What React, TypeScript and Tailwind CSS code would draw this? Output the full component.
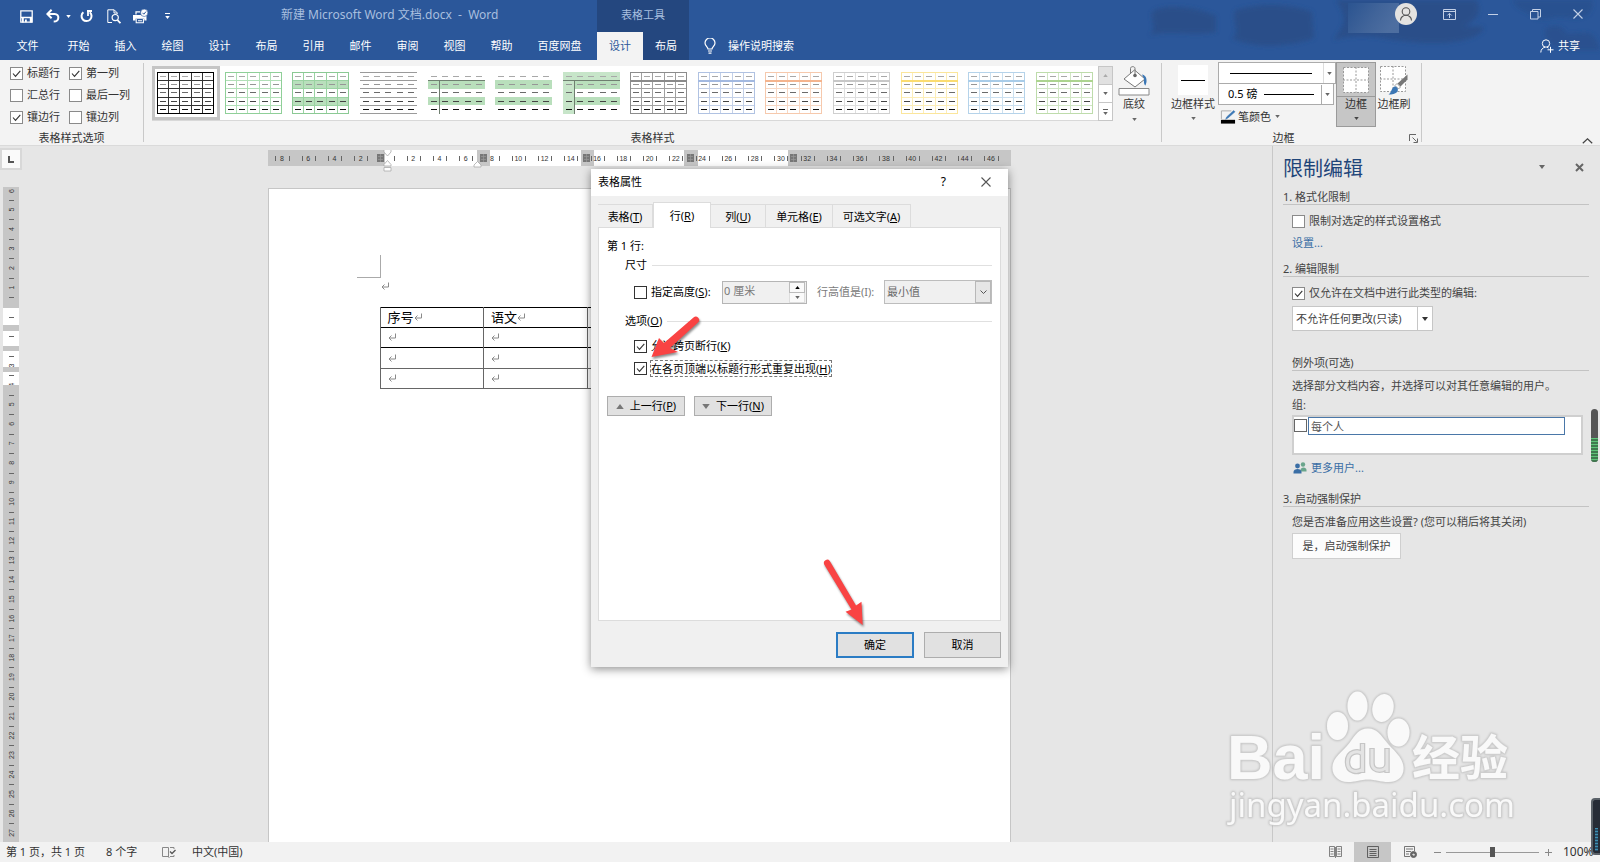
import React, { useId } from "react";

const noop = () => {};

function Caret({ className = "" }: { className?: string }) {
  return (
    <svg viewBox="0 0 6 4" className={`h-[3px] w-[5px] shrink-0 ${className}`} aria-hidden="true">
      <path d="M0 0h6L3 4z" fill="currentColor" />
    </svg>
  );
}

function Check({
  label,
  checked = false,
  border = "border-[#8a8a8a]",
  gap = "gap-1",
  hideLabel = false,
}: {
  label: React.ReactNode;
  checked?: boolean;
  border?: string;
  gap?: string;
  hideLabel?: boolean;
}) {
  const id = useId();
  return (
    <span className={`flex items-center ${gap}`}>
      <span className="relative flex size-[13px] shrink-0">
        <input
          id={id}
          type="checkbox"
          defaultChecked={checked}
          aria-label={hideLabel ? "每个人" : undefined}
          className={`peer size-[13px] appearance-none border bg-white ${border}`}
        />
        <svg viewBox="0 0 13 13" className="pointer-events-none absolute inset-0 hidden size-[13px] peer-checked:block">
          <path d="M3 6.5l2.5 2.8L10.3 3.8" fill="none" stroke="#333" strokeWidth="1.1" />
        </svg>
      </span>
      {!hideLabel && (
        <label htmlFor={id} className="whitespace-nowrap">
          {label}
        </label>
      )}
    </span>
  );
}

/* ---------- title bar ---------- */

function QuickAccess() {
  return (
    <div className="flex items-center text-white">
      <button aria-label="保存" className="ml-5 w-[13px]">
        <svg viewBox="0 0 13 13" className="size-[13px]">
          <path d="M.8.8h11.400v11.400H.8z" fill="none" stroke="currentColor" strokeWidth="1.300" />
          <path d="M1 6.800h11v1.400H1zM2 8h1.800v4.500H2zM9.800 8H12v4.500H9.800z" fill="currentColor" />
          <path d="M5 9.500h1.800v2.800H5z" fill="currentColor" />
        </svg>
      </button>
      <button aria-label="撤消" className="ml-[13px] flex w-6 items-center gap-1.5">
        <svg viewBox="0 0 14 14" className="size-[14px] shrink-0">
          <path d="M1.5 5h7.2c5 0 5 7.6-1 7.6" fill="none" stroke="currentColor" strokeWidth="2" />
          <path d="M5.6.8L1.4 5l4.2 4.2" fill="none" stroke="currentColor" strokeWidth="2" />
        </svg>
        <Caret />
      </button>
      <button aria-label="重复" className="ml-[10px] w-[13px]">
        <svg viewBox="0 0 13 14" className="h-[14px] w-[13px]">
          <path d="M3.4 3.2a5 5 0 1 0 6.4.1" fill="none" stroke="currentColor" strokeWidth="2" />
          <path d="M7 2h5M8 1.500v5.500" fill="none" stroke="currentColor" strokeWidth="1.8" />
        </svg>
      </button>
      <button aria-label="打印预览" className="ml-[14px] w-[14px]">
        <svg viewBox="0 0 14 15" className="h-[15px] w-[14px]" fill="none" stroke="currentColor">
          <path d="M5 13.5H.8V.8h6.4l3 3V5" strokeWidth="1" />
          <path d="M7 1v3h3" strokeWidth="1" />
          <circle cx="8.2" cy="8.6" r="3.1" strokeWidth="1.2" />
          <path d="M10.4 11l3 3.2" strokeWidth="1.8" />
        </svg>
      </button>
      <button aria-label="快速打印" className="ml-[12px] w-[15px]">
        <svg viewBox="0 0 15 15" className="size-[15px]">
          <path d="M0 6h13.500v5.500h-2.200V9.800H2.500v1.700H0z" fill="currentColor" />
          <path d="M3 5.500V2.800h4" fill="none" stroke="currentColor" strokeWidth="1.200" />
          <path d="M3.200 10v3.800h7.200V10M5 11.800h4" fill="none" stroke="currentColor" strokeWidth="1.100" />
          <circle cx="11.2" cy="3.8" r="3.7" fill="currentColor" stroke="#2b579a" strokeWidth=".6" />
          <path d="M9.500 3.800l1.300 1.400 2.200-2.600" fill="none" stroke="#2b579a" strokeWidth="1" />
        </svg>
      </button>
      <button aria-label="自定义快速访问工具栏" className="ml-[17px] flex flex-col items-center gap-0.5">
        <span className="h-px w-[5px] bg-white" />
        <Caret />
      </button>
    </div>
  );
}

function HeaderArt() {
  return (
    <svg viewBox="0 0 460 60" className="pointer-events-none absolute top-0 right-0 h-[60px] w-[460px]" aria-hidden="true">
      <defs>
        <filter id="soft" x="-10%" y="-10%" width="120%" height="120%">
          <feGaussianBlur stdDeviation="2" />
        </filter>
        <linearGradient id="mosaic" x1="0" x2="1" y1="0" y2="0.4">
          <stop offset="0" stopColor="#2b5592" />
          <stop offset="0.6" stopColor="#476a9e" />
          <stop offset="1" stopColor="#5676a6" />
        </linearGradient>
      </defs>
      <g fill="#294d86" filter="url(#soft)" opacity="0.8">
        <path d="M12 12C25 2 60 8 76 16v16c-20 4-50-2-66 3 8-8 0-14 2-23z" />
        <path d="M96 10c20-6 50-8 76 2l2 26c-20 8-60 12-82 0 10-4-2-20 4-28z" />
        <path d="M196 0h140c8 12-2 22-12 26 8 2 14-2 20 2-8 16-50 18-90 12-20-4-40-6-60 0 8-14 16-18 2-40z" />
        <path d="M372 0h80c4 14-10 20-22 18-20-4-30 8-40-4-8-4-12-4-18-14z" opacity=".6" />
        <path d="M405 30c8-8 18-4 22 4 12 0 26-6 30 8l3 8h-30c-12-2-26-6-25-20z" opacity=".7" />
      </g>
      <path d="M208 3h51v30h-51z" fill="url(#mosaic)" opacity="0.8" />
    </svg>
  );
}

function WindowControls() {
  return (
    <div className="relative ml-auto flex items-center text-[#c3d0e6]">
      <button aria-label="帐户" className="mr-[26px] mb-1 flex size-[22px] items-center justify-center rounded-full bg-[#e4e3e1]">
        <svg viewBox="0 0 16 16" className="size-4" fill="none" stroke="#555" strokeWidth="1.1">
          <circle cx="8" cy="5.5" r="3.8" />
          <path d="M2.5 14.5c0-3 2.5-5.2 5.500-5.200s5.500 2.200 5.500 5.200" />
        </svg>
      </button>
      <button aria-label="功能区显示选项" className="mr-[32px] mb-1">
        <svg viewBox="0 0 13 11" className="h-[11px] w-[13px]" fill="none" stroke="currentColor">
          <path d="M.5.5h12v10H.5zM.5 2.5h12M6.500 9V4.500M4.300 6.500l2.200-2.200 2.200 2.200" />
        </svg>
      </button>
      <button aria-label="最小化" className="mr-[32px] mb-1">
        <svg viewBox="0 0 10 11" className="h-[11px] w-[10px]" stroke="currentColor">
          <path d="M0 5.500h10" />
        </svg>
      </button>
      <button aria-label="向下还原" className="mr-[32px] mb-1">
        <svg viewBox="0 0 11 11" className="size-[11px]" fill="none" stroke="currentColor">
          <path d="M.5 2.500h7.500v7.500H.5zM2.500 2.500V.5h8v7.500H8" />
        </svg>
      </button>
      <button aria-label="关闭" className="mr-[17px] mb-1">
        <svg viewBox="0 0 10 10" className="size-[10px]" stroke="currentColor" strokeWidth="1.1">
          <path d="M.5.5l9 9M9.500.5l-9 9" />
        </svg>
      </button>
    </div>
  );
}

const mainTabs = ["开始", "插入", "绘图", "设计", "布局", "引用", "邮件", "审阅", "视图", "帮助"];

function Header() {
  return (
    <header className="relative bg-[#2b579a]">
      <HeaderArt />
      <div className="relative flex h-8 items-stretch">
        <div className="flex w-[597px] shrink-0 items-stretch">
          <QuickAccess />
          <h1 className="ml-[111px] flex items-center pb-0.5 text-[12px] whitespace-pre text-[#a8bfdf]">
            新建 Microsoft Word 文档.docx{"  -  "}Word
          </h1>
        </div>
        <div className="flex w-[92px] shrink-0 items-center justify-center bg-[#24477f] pb-0.5 text-[#a8bfdf]">表格工具</div>
        <WindowControls />
      </div>
      <nav className="relative flex h-7 items-stretch text-white">
        <div className="flex w-[597px] shrink-0">
          <button className="w-[55px]">文件</button>
          {mainTabs.map((t) => (
            <button key={t} className="w-[47px]">
              {t}
            </button>
          ))}
          <button className="w-[69px]">百度网盘</button>
        </div>
        <div className="flex w-[92px] shrink-0 bg-[#24477f]">
          <button className="w-[46px] bg-[#f3f3f3] text-[#2b579a]">设计</button>
          <button className="w-[46px]">布局</button>
        </div>
        <button className="ml-[15px] flex items-center gap-3">
          <svg viewBox="0 0 12 16" className="h-4 w-3" fill="none" stroke="currentColor" strokeWidth="1.2">
            <path d="M4 11c0-2-3-3-3-6a5 5 0 0 1 10 0c0 3-3 4-3 6zM4 13h4M4.500 15.200h3" />
          </svg>
          操作说明搜索
        </button>
        <button className="mr-5 ml-auto flex items-center gap-1">
          <svg viewBox="0 0 14 14" className="size-[14px]" fill="none" stroke="currentColor">
            <circle cx="6" cy="4.500" r="3.700" />
            <path d="M.8 13.500c0-3 2-4.800 4.200-5.300M7 8.200l1.500.8M7.500 10.800h6M10.500 7.800v6" />
          </svg>
          共享
        </button>
      </nav>
    </header>
  );
}

/* ---------- ribbon ---------- */

type Preview = {
  grid?: string;
  outer?: string;
  head?: string;
  hLines?: string;
  band?: string;
  headFill?: string;
  firstCol?: string;
  ruleHead?: boolean;
};

const previews: Preview[] = [
  { grid: "#333", outer: "#000" },
  { grid: "#b2e0b8", outer: "#8fcf98" },
  { grid: "#9ad3a2", outer: "#8bc994", band: "#b9dfbc" },
  { hLines: "#9a9a9a" },
  { band: "#b9dfbc", ruleHead: true },
  { band: "#b9dfbc" },
  { band: "#b9dfbc", headFill: "#c7e5c9", firstCol: "#c7e5c9", ruleHead: true },
  { grid: "#a0a0a0", outer: "#8c8c8c", head: "#8a8a8a" },
  { grid: "#c3d0e8", outer: "#b0c2e2", head: "#a3b9e0" },
  { grid: "#f8d8c4", outer: "#f6c9ad", head: "#f4b48e" },
  { grid: "#dedede", outer: "#cfcfcf", head: "#c8c8c8" },
  { grid: "#fdeeb8", outer: "#fbe69c", head: "#fbdc70" },
  { grid: "#cbe0f0", outer: "#b5d3ea", head: "#a9cce8" },
  { grid: "#d1e6c5", outer: "#bedcab", head: "#add490" },
];

const dashTones = ["#a8a8a8", "#969696", "#6a6a6a", "#444", "#111"];
const rowTops = [0, 8, 16, 25, 33, 41];
const colLefts = [0, 11, 22, 34, 45, 56];

function TablePreview({ p }: { p: Preview }) {
  return (
    <svg viewBox="0 0 57 42" className="h-[42px] w-[57px] shrink-0" aria-hidden="true">
      {p.band && (
        <g fill={p.band}>
          <rect x="0" y="8" width="57" height="9" />
          <rect x="0" y="25" width="57" height="8" />
        </g>
      )}
      {p.headFill && <rect x="0" y="0" width="57" height="8" fill={p.headFill} />}
      {p.firstCol && <rect x="0" y="0" width="11" height="42" fill={p.firstCol} />}
      {p.grid && (
        <g stroke={p.grid} strokeWidth="1">
          {rowTops.slice(1, 5).map((y) => (
            <path key={y} d={`M0 ${y + 0.5}h57`} />
          ))}
          {colLefts.slice(1, 5).map((x) => (
            <path key={x} d={`M${x + 0.5} 0v42`} />
          ))}
          <rect x="0.5" y="0.5" width="56" height="41" fill="none" stroke={p.outer} />
        </g>
      )}
      {p.hLines && rowTops.map((y) => <path key={y} d={`M0 ${y + 0.5}h57`} stroke={p.hLines} strokeWidth="1" />)}
      {p.head && <path d="M0 9h57" stroke={p.head} strokeWidth="2" />}
      {p.ruleHead && <path d="M0 8.500h57M11.500 8v34" stroke="#6f7f70" strokeWidth="1" fill="none" />}
      {dashTones.map((tone, r) =>
        colLefts.slice(0, 5).map((x) => (
          <rect key={`${r}-${x}`} x={x + 3} y={rowTops[r] + 4} width="6" height="1" fill={tone} />
        )),
      )}
    </svg>
  );
}

function Divider() {
  return <div className="my-[3px] w-px shrink-0 bg-[#c9c9c9]" />;
}

function Ribbon() {
  return (
    <section className="flex h-[86px] shrink-0 border-b border-[#dadada] bg-[#f3f3f3] text-[#333]">
      <div className="flex w-[143px] shrink-0 flex-col items-center">
        <div className="mt-0.5 grid grid-cols-[59px_1fr] grid-rows-[22px_22px_22px] self-stretch pl-[10px]">
          <Check label="标题行" checked />
          <Check label="第一列" checked />
          <Check label="汇总行" />
          <Check label="最后一列" />
          <Check label="镶边行" checked />
          <Check label="镶边列" />
        </div>
        <div className="mt-auto leading-[14px]">表格样式选项</div>
      </div>
      <Divider />
      <div className="flex min-w-0 flex-1 flex-col">
        <div className="flex pt-1.5 pl-2">
          <div className="flex h-[55px] min-w-0 flex-1 border-b border-[#d8d8d8] bg-white">
            {previews.map((p, i) => (
              <button
                key={i}
                aria-label={`表格样式 ${i + 1}`}
                className={`flex min-w-0 flex-1 items-center justify-center ${i === 0 ? "shadow-[inset_0_0_0_3px_#c5c5c5]" : ""}`}
              >
                <TablePreview p={p} />
              </button>
            ))}
          </div>
          <div className="flex h-[55px] w-[15px] shrink-0 flex-col border border-[#c6c6c6] bg-white text-[#666]">
            <button aria-label="上一行样式" className="flex flex-1 items-center justify-center bg-[#e1e1e1] text-[#aaa]">
              <Caret className="rotate-180" />
            </button>
            <button aria-label="下一行样式" className="flex flex-1 items-center justify-center border-y border-[#c6c6c6]">
              <Caret />
            </button>
            <button aria-label="其他样式" className="flex flex-1 flex-col items-center justify-center gap-0.5">
              <span className="h-px w-[5px] bg-[#666]" />
              <Caret />
            </button>
          </div>
          <button className="mr-[7px] ml-px flex h-[55px] w-10 shrink-0 flex-col items-center text-[#333]">
            <svg viewBox="0 0 32 30" className="h-[30px] w-8 shrink-0" aria-hidden="true">
              <path d="M6 13L16.500 4 27 13l-10 8z" fill="#fff" stroke="#777" strokeWidth="1" />
              <path d="M12.500 8V2.500c0-2.500 4.500-2.500 4.500 0V10" fill="none" stroke="#777" strokeWidth="1" />
              <circle cx="17" cy="9.500" r="1.800" fill="#666" />
              <path d="M24 8.500c3 .5 5 3 4.500 7.500l-1 3.500c-2-1-1.500-5-1.500-7z" fill="#3b77b5" />
              <path d="M1 22.500h30v6.500H1z" fill="#fff" stroke="#888" strokeWidth="1" />
            </svg>
            <span className="leading-4">底纹</span>
            <Caret className="mt-1.5 text-[#666]" />
          </button>
        </div>
        <div className="mt-auto text-center leading-[14px]">表格样式</div>
      </div>
      <Divider />
      <div className="flex w-[259px] shrink-0 flex-col">
        <div className="flex pt-0.5 pl-1.5">
          <button className="mt-[3px] flex w-[50px] flex-col items-center">
            <span className="flex size-[30px] items-center justify-center bg-white">
              <span className="h-px w-6 bg-black" />
            </span>
            <span className="leading-[18px] whitespace-nowrap">边框样式</span>
            <Caret className="mt-1 text-[#666]" />
          </button>
          <div className="flex w-[118px] flex-col">
            <button aria-label="笔样式" className="flex h-[22px] w-[118px] items-stretch border border-[#ababab] bg-white">
              <span className="mx-[11px] h-px flex-1 self-center bg-black" />
              <span className="flex w-3 items-center justify-center border-l border-[#ddd] text-[#666]">
                <Caret />
              </span>
            </button>
            <div className="relative h-[21px] w-[116px]">
              <select aria-label="笔划粗细" className="h-[21px] w-[116px] appearance-none border border-t-0 border-[#ababab] bg-white pl-[9px] text-black">
                <option>0.5 磅</option>
              </select>
              <span className="pointer-events-none absolute inset-y-0 right-px flex w-[69px] items-center">
                <span className="mr-[7px] h-px flex-1 bg-black" />
                <span className="flex h-5 w-3 items-center justify-center border-l border-[#ababab] text-[#666]">
                  <Caret />
                </span>
              </span>
            </div>
            <button className="flex h-[23px] items-center gap-0.5 pl-0.5">
              <svg viewBox="0 0 17 16" className="h-4 w-4" aria-hidden="true">
                <path d="M1.500 10V1.500H12" fill="none" stroke="#aaa" />
                <path d="M14.500 1l1.500 1.500L8.500 9 6 10.500 7 8z" fill="#3b77b5" stroke="#3b77b5" strokeWidth=".5" />
                <path d="M1 11h15v4H1z" fill="#000" />
              </svg>
              <span>笔颜色</span>
              <Caret className="ml-0.5 text-[#666]" />
            </button>
          </div>
          <button className="flex h-[65px] w-10 flex-col items-center border border-[#9a9a9a] bg-[#c6c6c6]">
            <span className="flex h-[34px] w-full items-center justify-center border-b border-[#9a9a9a]">
              <svg viewBox="0 0 26 26" className="size-[26px]" aria-hidden="true">
                <path d="M.5.5h25v25H.5zM13 0v26M0 13h26" fill="#fff" stroke="#999" strokeDasharray="2 1.500" />
              </svg>
            </span>
            <span className="leading-[14px]">边框</span>
            <Caret className="mt-1.5 text-[#444]" />
          </button>
          <button className="mt-[3px] flex w-9 flex-col items-center">
            <svg viewBox="0 0 30 30" className="h-[30px] w-[30px]" aria-hidden="true">
              <path d="M1.500 1.500h25v25h-25zM14 1v26M1 14h26" fill="#fff" stroke="#999" strokeDasharray="2 1.500" />
              <path d="M28.500 9.500v5l-7 7-3-3z" fill="#777" />
              <path d="M18 18.500l3.500 3.500-2 2-3.500-3.500z" fill="#fff" stroke="#888" strokeWidth=".8" />
              <path d="M15.500 21.500c3 0 4 2.500 3 5-1.500 2.500-6 3-9 3 3-1.500 3-7 6-8z" fill="#3b77b5" />
            </svg>
            <span className="leading-[18px] whitespace-nowrap">边框刷</span>
          </button>
        </div>
        <div className="mt-auto flex items-center leading-[14px]">
          <span className="flex-1 pr-1 text-center">边框</span>
          <button aria-label="边框设置" className="mr-[3px] w-[9px]">
            <svg viewBox="0 0 9 9" className="size-[9px]" fill="none" stroke="#666">
              <path d="M.5 7V.5H7M3.500 3.500l4 4M8.500 4.500v4h-4" />
            </svg>
          </button>
        </div>
      </div>
      <Divider />
      <div className="flex w-[178px] shrink-0 items-end justify-end pr-[7px] pb-px">
        <button aria-label="折叠功能区" className="flex">
          <svg viewBox="0 0 11 6" className="h-1.5 w-[11px]" fill="none" stroke="#444" strokeWidth="1.200">
            <path d="M.8 5.300l4.700-4.500 4.700 4.500" />
          </svg>
        </button>
      </div>
    </section>
  );
}

/* ---------- rulers and page ---------- */

const H_ZERO = 119;
const H_UNIT = 13.13;
const hNumbers = Array.from({ length: 28 }, (_, i) => (i - 4) * 2).filter((n) => n !== 0 && n <= 46);
const hTicks = Array.from({ length: 57 }, (_, i) => i - 8.5).filter((n) => n !== -0.5 && n <= 47.5);
const columnMarks = [109, 212, 315, 419, 522];

function HorizontalRuler() {
  return (
    <svg viewBox="0 0 743 22" className="h-[22px] w-[743px] shrink-0" aria-hidden="true">
      <rect width="743" height="16" y="0" fill="#c6c6c6" />
      <g fill="#fff">
        <rect x="117" y="0" width="92" height="16" />
        <rect x="222" y="0" width="91" height="16" />
        <rect x="326" y="0" width="90" height="16" />
        <rect x="430" y="0" width="90" height="16" />
      </g>
      {hTicks.map((n) => (
        <rect key={n} x={Math.round(H_ZERO + n * H_UNIT)} y="6" width="1" height="5" fill="#666" />
      ))}
      <g fontSize="7" fontFamily="Liberation Sans, sans-serif" textAnchor="middle" fill="#333">
        {hNumbers.map((n) => (
          <text key={n} x={H_ZERO + n * H_UNIT} y="11">
            {Math.abs(n)}
          </text>
        ))}
      </g>
      {columnMarks.map((x) => (
        <g key={x}>
          <rect x={x} y="4" width="7" height="8" fill="#777" />
          <path d={`M${x + 1} 6.500h5M${x + 1} 9.500h5M${x + 3.5} 4v8`} stroke="#999" strokeWidth=".7" />
        </g>
      ))}
      <g fill="#fff" stroke="#aaa" strokeWidth=".8">
        <path d="M116 -1h7v3l-3.500 4-3.500-4z" />
        <path d="M116 16v-1.500l3.500-4 3.500 4V16zM116 17.500h7V21h-7z" />
        <path d="M206 17v-2l3.500-3.500L213 15v2z" />
      </g>
    </svg>
  );
}

const V_ZERO = 120;
const V_UNIT = 19.48;
const vNumbers = Array.from({ length: 34 }, (_, i) => i - 6).filter((n) => n !== 0);
const vTicks = Array.from({ length: 33 }, (_, i) => i - 5.5);

function VerticalRuler() {
  return (
    <svg viewBox="0 0 16 655" className="h-[655px] w-4 shrink-0" aria-hidden="true">
      <rect width="16" height="655" fill="#c6c6c6" />
      <g fill="#fff">
        <rect y="121" width="16" height="17" />
        <rect y="144" width="16" height="15" />
        <rect y="164" width="16" height="16" />
        <rect y="185" width="16" height="13" />
      </g>
      {vTicks.map((n) => (
        <rect key={n} x="6" y={Math.round(V_ZERO + n * V_UNIT)} width="5" height="1" fill="#666" />
      ))}
      <g fontSize="7" fontFamily="Liberation Sans, sans-serif" textAnchor="middle" fill="#333">
        {vNumbers
          .filter((n) => n !== 1 && n !== 2)
          .map((n) => (
            <text key={n} transform={`translate(11 ${V_ZERO + n * V_UNIT + (n === -6 ? 1 : 0)}) rotate(-90)`}>
              {Math.abs(n)}
            </text>
          ))}
      </g>
      <g fill="#c6c6c6">
        <rect y="180" width="16" height="5" />
        <rect y="198" width="16" height="4" />
      </g>
    </svg>
  );
}

function Mark() {
  return (
    <svg viewBox="0 0 8 8" className="inline-block size-2 align-[1px]" fill="none" stroke="#8a8a8a" aria-hidden="true">
      <path d="M7.500.5v4.500h-6.500M3.500 2.500L1 5l2.500 2.500" />
    </svg>
  );
}

const docRows = [
  ["序号", "语文", "", ""],
  ["", "", "", ""],
  ["", "", "", ""],
  ["", "", "", ""],
];

function Workspace() {
  return (
    <main className="flex min-h-0 flex-1 bg-[#e6e6e6]">
      <div className="flex w-6 shrink-0 flex-col overflow-hidden">
        <button aria-label="制表符" className="mt-0.5 flex h-[22px] w-[22px] shrink-0 items-center justify-center border-2 border-[#d8d8d8] bg-[#fafafa]">
          <svg viewBox="0 0 6 7" className="h-[7px] w-1.5">
            <path d="M1 0v6h5" fill="none" stroke="#555" strokeWidth="2" />
          </svg>
        </button>
        <div className="mt-[17px] pl-[3px]">
          <VerticalRuler />
        </div>
      </div>
      <div className="flex min-w-0 flex-1 flex-col items-center overflow-hidden pt-1 pr-[18px]">
        <HorizontalRuler />
        <article className="mt-4 w-[743px] flex-1 border border-b-0 border-[#c6c6c6] bg-white text-[13px] text-black">
          <div className="mt-[66px] ml-[88px] h-[23px] w-6 border-r border-b border-[#aaa]" />
          <div className="ml-[112px] flex h-[29px] items-start pt-1">
            <Mark />
          </div>
          <table className="ml-[111px] w-[415px] table-fixed border-collapse">
            <tbody>
              {docRows.map((row, r) => (
                <tr
                  key={r}
                  className={r < 2 ? "h-5 border-y border-black" : r === 2 ? "h-[21px] border-t border-black" : "h-5 border-y border-[#666]"}
                >
                  {row.map((cell, c) => (
                    <td key={c} className="border-x border-x-[#666] p-0 pl-[7px] align-middle leading-[19px]">
                      {cell}
                      <Mark />
                    </td>
                  ))}
                </tr>
              ))}
            </tbody>
          </table>
        </article>
      </div>
      <RestrictPane />
    </main>
  );
}

/* ---------- side pane ---------- */

function PaneHeading({ children, className = "" }: { children: React.ReactNode; className?: string }) {
  return <h3 className={`h-[17px] border-b border-[#c3c3c3] leading-[17px] ${className}`}>{children}</h3>;
}

function RestrictPane() {
  return (
    <aside className="w-[328px] shrink-0 border-l border-[#c8c8c8] pr-[11px] pl-[10px] text-[#444]">
      <div className="flex h-[42px] items-center">
        <h2 className="pt-1 text-[20px] text-[#1f4579]">限制编辑</h2>
        <button aria-label="任务窗格选项" className="ml-auto text-[#666]">
          <Caret className="!h-1 !w-2" />
        </button>
        <button aria-label="关闭窗格" className="mr-[5px] ml-[29px]">
          <svg viewBox="0 0 9 9" className="size-[9px]" stroke="#666" strokeWidth="2">
            <path d="M1 1l7 7M8 1L1 8" />
          </svg>
        </button>
      </div>
      <PaneHeading>1. 格式化限制</PaneHeading>
      <div className="mt-[5px] flex h-[22px] items-center pl-[9px]">
        <Check label="限制对选定的样式设置格式" />
      </div>
      <div className="flex h-[22px] items-center pl-[9px]">
        <a href="#settings" className="text-[#3a6ea5]">
          设置...
        </a>
      </div>
      <PaneHeading className="mt-1.5">2. 编辑限制</PaneHeading>
      <div className="mt-[5px] flex h-[22px] items-center pl-[9px]">
        <Check label="仅允许在文档中进行此类型的编辑:" checked />
      </div>
      <div className="pl-[9px]">
        <div className="relative mt-0.5 h-[25px] w-[141px]">
          <select aria-label="编辑限制类型" className="h-[25px] w-[141px] appearance-none border border-[#c6c6c6] bg-white pl-[3px] text-[#444]">
            <option>不允许任何更改(只读)</option>
          </select>
          <span className="pointer-events-none absolute inset-y-px right-px flex w-[15px] items-center justify-center border-l border-[#c6c6c6] bg-white text-[#333]">
            <Caret className="!h-1 !w-2" />
          </span>
        </div>
        <PaneHeading className="mt-[23px]">例外项(可选)</PaneHeading>
        <p className="mt-[5px] leading-5 whitespace-nowrap">选择部分文档内容，并选择可以对其任意编辑的用户。</p>
        <p className="leading-[18px]">组:</p>
        <div className="mt-px mr-[6px] flex h-10 items-start border-2 border-[#cfcfcf] bg-white">
          <div className="pt-0.5">
            <Check label="" hideLabel border="border-[#666]" />
          </div>
          <input aria-label="组名称" defaultValue="每个人" className="ml-px h-[18px] w-[257px] border border-[#4a77a8] bg-white pl-0.5 text-[#555]" />
        </div>
        <a href="#users" className="mt-1 ml-px flex h-[18px] items-center gap-1 text-[#3a6ea5]">
          <svg viewBox="0 0 14 12" className="h-3 w-[14px]" aria-hidden="true">
            <circle cx="10" cy="2.500" r="2.200" fill="#6aa58c" />
            <path d="M7.500 9.500V8c0-3.500 6-3.500 6 0v1.500z" fill="#6aa58c" />
            <circle cx="4.500" cy="4" r="2.400" fill="#3a6ea5" />
            <path d="M.5 11.500V10c0-4 8-4 8 0v1.500z" fill="#3a6ea5" />
          </svg>
          更多用户...
        </a>
      </div>
      <PaneHeading className="mt-[13px]">3. 启动强制保护</PaneHeading>
      <div className="pl-[9px]">
        <p className="mt-[5px] leading-5 whitespace-nowrap">您是否准备应用这些设置? (您可以稍后将其关闭)</p>
        <button className="mt-px h-[26px] w-[109px] border border-[#cfcfcf] bg-[#fcfcfc]">是，启动强制保护</button>
      </div>
    </aside>
  );
}

/* ---------- dialog ---------- */

function Key({ k }: { k: string }) {
  return (
    <>
      (<span className="underline underline-offset-1">{k}</span>)
    </>
  );
}

const dialogTabs = [
  { name: "表格", k: "T", w: "w-[55px]" },
  { name: "行", k: "R", w: "w-[58px]" },
  { name: "列", k: "U", w: "w-[55px]" },
  { name: "单元格", k: "E", w: "w-[67px]" },
  { name: "可选文字", k: "A", w: "w-[78px]" },
];

function Legend({ children }: { children: React.ReactNode }) {
  return (
    <div className="flex h-5 items-center gap-[5px] pl-[18px]">
      <span>{children}</span>
      <span className="h-px flex-1 bg-[#e0e0e0]" />
    </div>
  );
}

function PropertiesDialog() {
  return (
    <div
      role="dialog"
      aria-label="表格属性"
      className="absolute top-[169px] left-[591px] flex w-[417px] flex-col bg-[#f0f0f0] text-black shadow-[0_2px_9px_rgba(0,0,0,0.45)]"
    >
      <div className="flex h-[27px] items-center bg-white pr-[17px] pb-0.5 pl-[7px]">
        <span>表格属性</span>
        <button aria-label="帮助" className="ml-auto text-[12px]">
          ?
        </button>
        <button aria-label="关闭" className="ml-[35px]">
          <svg viewBox="0 0 10 10" className="size-[10px]" stroke="#555" strokeWidth="1.100">
            <path d="M.5.5l9 9M9.500.5l-9 9" />
          </svg>
        </button>
      </div>
      <div className="flex flex-col px-[7px] pt-[7px] pb-[9px]">
        <div role="tablist" className="flex h-6 items-end">
          {dialogTabs.map((t) => (
            <button
              key={t.name}
              role="tab"
              aria-selected={t.k === "R"}
              className={`${t.w} whitespace-nowrap ${
                t.k === "R" ? "relative top-px h-[26px] border border-b-0 border-[#dcdcdc] bg-white pb-1" : "h-[23px] border-t border-r border-[#dcdcdc] pb-1"
              } pt-1`}
            >
              {t.name}
              <Key k={t.k} />
            </button>
          ))}
        </div>
        <div className="flex h-[394px] flex-col border border-[#dcdcdc] bg-white px-[8px] pt-[9px]">
          <div className="leading-[18px]">第 1 行:</div>
          <Legend>尺寸</Legend>
          <div className="mt-[5px] flex h-6 items-center pl-[27px]">
            <Check label={<>指定高度<Key k="S" />:</>} border="border-[#333]" />
            <div className="ml-auto flex h-[23px] w-[85px] items-stretch border border-[#b5b5b5] bg-[#f0f0f0]">
              <input aria-label="高度" disabled defaultValue="0 厘米" className="w-[66px] bg-transparent pb-0.5 pl-px text-[#7a7a7a]" />
              <div className="flex w-4 flex-col bg-[#fafafa]">
                <button aria-label="增加" className="flex flex-1 items-center justify-center border border-[#bbb] text-black">
                  <Caret className="rotate-180" />
                </button>
                <button aria-label="减少" className="flex flex-1 items-center justify-center border border-t-0 border-[#ddd] text-[#666]">
                  <Caret />
                </button>
              </div>
            </div>
            <label htmlFor="row-rule" className="ml-[10px] w-[67px] text-[#7a7a7a]">
              行高值是(I):
            </label>
            <div className="relative h-6 w-[108px]">
              <select id="row-rule" disabled className="h-6 w-[108px] appearance-none border border-[#bdbdbd] bg-[#f0f0f0] pl-0.5 text-[#6a6a6a] opacity-100">
                <option>最小值</option>
              </select>
              <span className="pointer-events-none absolute inset-y-px right-px flex w-4 items-center justify-center border border-[#b8b8b8] bg-[#e6e6e6]">
                <svg viewBox="0 0 7 4" className="h-1 w-[7px]" fill="none" stroke="#555">
                  <path d="M.5.5l3 3 3-3" />
                </svg>
              </span>
            </div>
          </div>
          <div className="mt-[7px]">
            <Legend>
              选项
              <Key k="O" />
            </Legend>
          </div>
          <div className="mt-1 flex h-[22px] items-center pl-[27px]">
            <Check label={<>允许跨页断行<Key k="K" /></>} checked border="border-[#333]" />
          </div>
          <div className="flex h-[22px] items-center pl-[27px]">
            <Check
              label={
                <span className="block border border-dashed border-[#777] leading-[15px]">
                  在各页顶端以标题行形式重复出现
                  <Key k="H" />
                </span>
              }
              checked
              border="border-[#333]"
              gap="gap-[3px]"
            />
          </div>
          <div className="mt-[17px] flex gap-[9px]">
            <button className="flex h-5 w-[78px] items-center justify-center gap-1.5 border border-[#adadad] bg-[#e1e1e1]">
              <Caret className="!h-[5px] !w-2 rotate-180 text-[#777]" />
              <span>
                上一行
                <Key k="P" />
              </span>
            </button>
            <button className="flex h-5 w-[78px] items-center justify-center gap-1.5 border border-[#adadad] bg-[#e1e1e1]">
              <Caret className="!h-[5px] !w-2 text-[#777]" />
              <span>
                下一行
                <Key k="N" />
              </span>
            </button>
          </div>
        </div>
        <div className="mt-[11px] flex justify-end gap-[10px]">
          <button className="h-[26px] w-[78px] border-2 border-[#2b7cc4] bg-[#e1e1e1]">确定</button>
          <button className="h-[26px] w-[77px] border border-[#adadad] bg-[#e1e1e1]">取消</button>
        </div>
      </div>
      <svg viewBox="0 0 417 498" className="pointer-events-none absolute top-0 left-0 h-[498px] w-[417px]" aria-hidden="true">
        <g fill="#f94343" stroke="none" style={{ filter: "drop-shadow(1px 2px 1px rgba(0,0,0,0.45))" }}>
          <path d="M60.500 188L68 169l5 5 29.500-25.500a3.300 3.300 0 0 1 4.500 5L79 179l8 4z" />
          <path d="M271.700 456L254.500 442.800l6-2.400-27.300-45a3.300 3.300 0 0 1 5.600-3.400L265 436.500l5.500-3.800z" />
        </g>
      </svg>
    </div>
  );
}

/* ---------- status bar ---------- */

function StatusBar() {
  return (
    <footer className="flex h-5 shrink-0 items-stretch bg-[#f2f2f2] text-[#333]">
      <div className="flex items-center">
        <span className="ml-1.5 w-[100px]">第 1 页，共 1 页</span>
        <span className="w-[56px]">8 个字</span>
        <svg viewBox="0 0 14 12" className="h-3 w-[14px]" fill="none" stroke="#888" aria-hidden="true">
          <path d="M6.500 1.500H.5v9h6l1 1M6.500 1.500v10M8 1.500h4V3M8 10.500h4V9" />
          <path d="M8 5.500l2 2 3.500-3.500" stroke="#555" strokeWidth="1.300" />
        </svg>
        <span className="ml-4">中文(中国)</span>
      </div>
      <div className="ml-auto flex items-center">
        <button aria-label="阅读视图" className="flex w-[37px] justify-center">
          <svg viewBox="0 0 13 12" className="h-3 w-[13px]" fill="none" stroke="#666" aria-hidden="true">
            <path d="M.5.500h5v10h-5zM7.500.5h5v10h-5zM6.500 1v11M1.500 3h3M1.500 5.500h3M1.500 8h3M8.500 3h3M8.500 5.500h3M8.500 8h3" strokeWidth=".8" />
          </svg>
        </button>
        <button aria-label="页面视图" className="flex h-5 w-[37px] items-center justify-center bg-[#c6c6c6]">
          <svg viewBox="0 0 12 12" className="size-3" fill="none" stroke="#555" aria-hidden="true">
            <path d="M.5.500h11v11H.5zM2.500 3.500h7M2.500 5.500h7M2.500 7.500h7M2.500 9.500h7" strokeWidth=".9" />
          </svg>
        </button>
        <button aria-label="Web 版式视图" className="flex w-[38px] justify-center">
          <svg viewBox="0 0 13 12" className="h-3 w-[13px]" fill="none" stroke="#666" aria-hidden="true">
            <path d="M6 10.500H.5V.5h10V5M2 3h7M2 5.500h5M2 8h3" strokeWidth=".9" />
            <circle cx="9.500" cy="8.500" r="3" fill="#666" />
            <path d="M8 8.500l1.500-1 1.500 1-1 1.500z" fill="#ddd" stroke="none" />
          </svg>
        </button>
        <button aria-label="缩小" className="ml-px flex w-[14px] justify-center">
          <span className="h-px w-[7px] bg-[#888]" />
        </button>
        <input
          type="range"
          aria-label="缩放"
          value={50}
          onChange={noop}
          className="mx-0.5 h-3 w-[93px] appearance-none bg-[linear-gradient(#999,#999)] bg-[length:100%_1px] bg-center bg-no-repeat [&::-webkit-slider-thumb]:h-[10px] [&::-webkit-slider-thumb]:w-[5px] [&::-webkit-slider-thumb]:appearance-none [&::-webkit-slider-thumb]:bg-[#555]"
        />
        <button aria-label="放大" className="flex w-[14px] justify-center">
          <svg viewBox="0 0 7 7" className="size-[7px]" stroke="#888">
            <path d="M0 3.500h7M3.500 0v7" />
          </svg>
        </button>
        <span className="mr-1.5 ml-2 w-[31px] text-[12px]">100%</span>
      </div>
    </footer>
  );
}

/* ---------- overlays ---------- */

function Watermark() {
  return (
    <svg
      viewBox="0 0 300 146"
      className="pointer-events-none absolute right-[79px] bottom-[32px] h-[146px] w-[300px]"
      style={{ filter: "drop-shadow(0 0 1px rgba(0,0,0,0.2))" }}
      aria-hidden="true"
    >
      <g fill="#f9f9f9" stroke="#cfcfcf" strokeWidth="1.500" paintOrder="stroke">
        <text x="6" y="95" fontSize="63" fontWeight="700" fontFamily="Liberation Sans, sans-serif">
          Bai
        </text>
        <ellipse cx="116.500" cy="42" rx="10.500" ry="14" />
        <ellipse cx="136.500" cy="22" rx="10" ry="14.500" />
        <ellipse cx="162" cy="24" rx="10.500" ry="14" transform="rotate(12 162 24)" />
        <ellipse cx="177.500" cy="48.500" rx="11" ry="14" />
        <path d="M147 44.500c9 0 13 7 18 13 6 8 17 15 17.500 26 .5 10-7 14.500-15 14.500-8 0-13-2.500-20.500-2.500S135 98 127 98c-9-.5-16-6-15.500-15 .5-10 10-15 17-24 6-8 9-14.500 18.500-14.500z" />
        <text x="191" y="91" fontSize="48" fontWeight="700" fontFamily="Noto Sans CJK SC, sans-serif">
          经验
        </text>
        <text x="8" y="133" fontSize="33" fontFamily="Noto Sans, sans-serif">
          jingyan.baidu.com
        </text>
      </g>
      <g fill="none">
        <path d="M141.500 59v30M141.500 70c-4-4-15-3-15 8s11 11 15 7M151 64v15c0 10 15 9 15 1V64M166 64v25" strokeWidth="5.500" stroke="#c6c6c6" />
        <path d="M141.500 60v28M141.500 70c-4-4-15-3-15 8s11 11 15 7M151 65v14c0 10 15 9 15 1V65M166 65v23" strokeWidth="3" stroke="#e4e4e4" />
      </g>
    </svg>
  );
}

function EdgeMeters() {
  return (
    <>
      <div className="absolute top-[409px] right-0.5 flex h-[53px] w-[7px] flex-col justify-end overflow-hidden rounded-full bg-[#555]">
        <div className="h-6 bg-[repeating-linear-gradient(#5fc47a_0_1px,#3f7a4f_1px_3px)]" />
      </div>
      <div className="absolute right-0 bottom-[7px] flex h-[57px] w-[9px] flex-col justify-end rounded-l-sm border-2 border-r-0 border-[#5a6168] bg-[#262c36] pr-0.5 pb-0.5 pl-0.5">
        <div className="h-[23px] bg-[repeating-linear-gradient(#3f8fb0_0_1px,#27506b_1px_3px)]" />
      </div>
    </>
  );
}

export default function App() {
  return (
    <div className="relative flex h-screen w-full flex-col overflow-hidden font-['Noto_Sans','Noto_Sans_CJK_SC',sans-serif] text-[11px] leading-4">
      <Header />
      <Ribbon />
      <Workspace />
      <StatusBar />
      <PropertiesDialog />
      <Watermark />
      <EdgeMeters />
    </div>
  );
}
